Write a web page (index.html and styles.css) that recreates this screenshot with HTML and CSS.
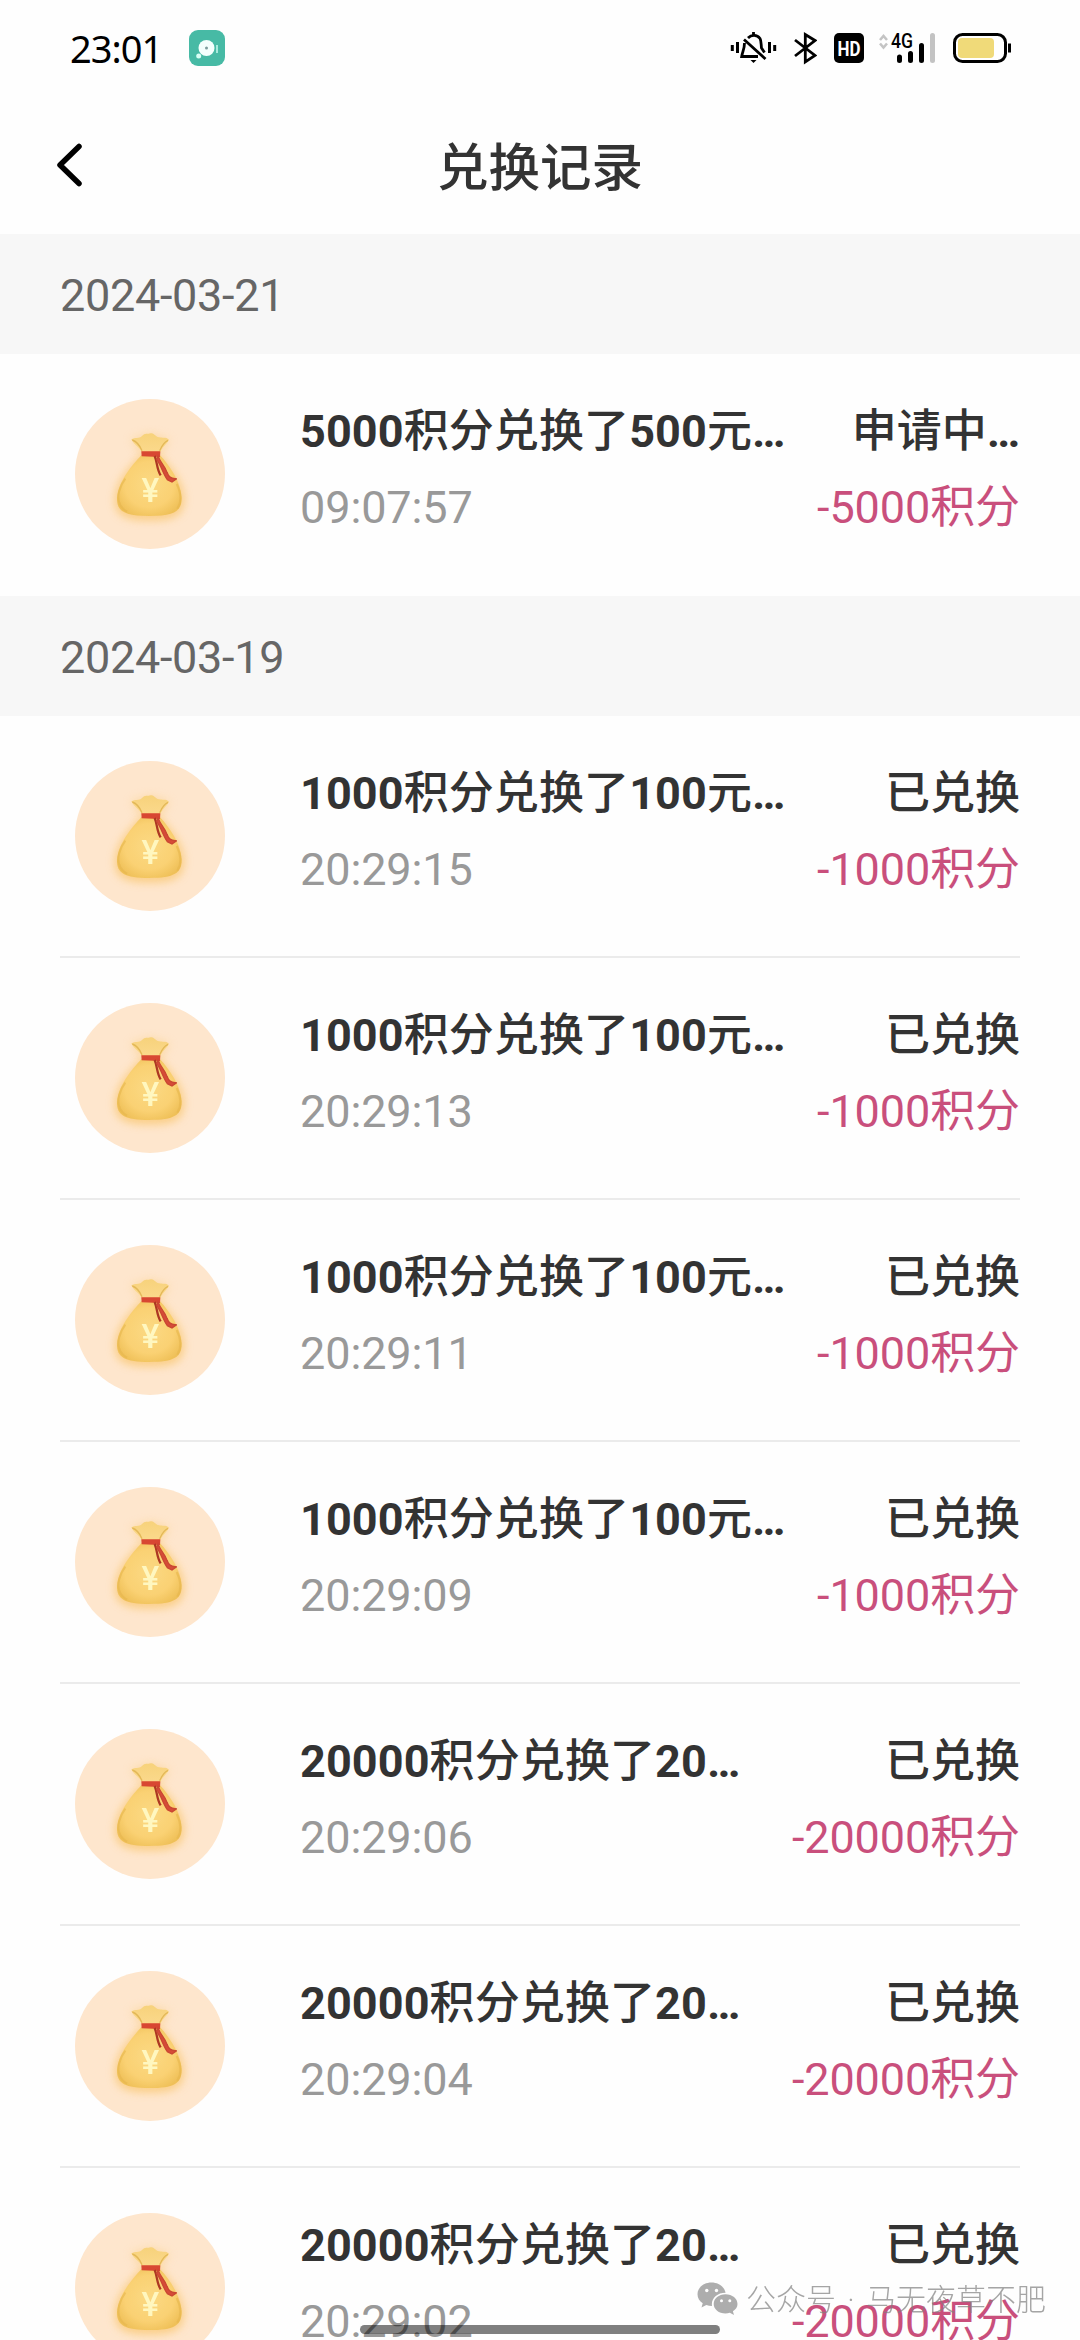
FILE: index.html
```html
<!DOCTYPE html>
<html lang="zh-CN">
<head>
<meta charset="utf-8">
<title>兑换记录</title>
<link rel="stylesheet" href="styles.css">
</head>
<body>
<svg class="defs" width="0" height="0">
  <defs>
    <radialGradient id="bagFill" cx="50%" cy="48%" r="58%">
      <stop offset="0" stop-color="#fbd983"/>
      <stop offset=".65" stop-color="#fad173"/>
      <stop offset="1" stop-color="#efc058"/>
    </radialGradient>
    <linearGradient id="neckFill" x1="0" y1="0" x2="0" y2="1">
      <stop offset="0" stop-color="#f7d27b"/>
      <stop offset="1" stop-color="#fbd98c"/>
    </linearGradient>
    <filter id="glow" x="-30%" y="-30%" width="160%" height="160%"><feGaussianBlur stdDeviation="12"/></filter>
    <filter id="soft" x="-5%" y="-5%" width="110%" height="110%"><feGaussianBlur stdDeviation="2"/></filter>
    <symbol id="bag" viewBox="45 57 450 450">
      <circle cx="270" cy="282" r="225" fill="#fee6cd"/>
      <path d="M243 226C205 262 164 310 164 362C166 406 190 422 270 422C345 422 370 406 373 362C373 310 335 262 300 226Z" fill="#f9c56b" opacity=".7" filter="url(#glow)"/>
      <path d="M212 176L272 158L330 178L300 230L243 230Z" fill="#f9cf88" opacity=".5" filter="url(#glow)"/>
      <g filter="url(#soft)">
        <path d="M214 178C225 171 237 177 246 168C255 158 263 164 272 160C281 157 286 170 297 172C307 175 317 170 327 179C321 191 306 201 300 218L246 218C243 204 222 196 214 178Z" fill="url(#neckFill)"/>
        <path d="M217 180C228 184 239 195 246 212M324 181C314 185 306 196 299 212" fill="none" stroke="#e3b858" stroke-width="4"/>
        <path d="M244 226C216 256 174 305 171 354C170 394 194 408 268 408C342 408 366 394 365 352C362 306 329 256 300 226Z" fill="url(#bagFill)"/>
        <path d="M196 296C178 320 170 349 179 371C184 384 192 390 201 395M350 312C363 338 365 365 352 386" fill="none" stroke="#e6b54c" stroke-width="6" opacity=".6"/>
        <path d="M244 214L301 214L300 231L245 229Z" fill="#d84631"/>
        <path d="M284 228C292 246 290 268 302 286" fill="none" stroke="#ad3824" stroke-width="7"/>
        <path d="M294 228C302 250 315 257 321 277C326 292 334 298 350 296L336 306L322 299C309 282 304 257 290 239Z" fill="#d64c38" stroke="#c94732" stroke-width="4"/>
        <text x="271" y="366" class="bag-yen">¥</text>
      </g>
    </symbol>
  </defs>
</svg>

<main class="screen">
  <div class="status">
    <span class="clock">23:01</span>
    <svg class="app-badge" width="36" height="36" viewBox="0 0 36 36">
      <rect width="36" height="36" rx="9" fill="#47baa5"/>
      <circle cx="17.5" cy="18" r="8" fill="#f4fffd"/>
      <circle cx="17.5" cy="18" r="1.5" fill="#7d9c9c"/>
      <circle cx="9.7" cy="26" r="2.5" fill="#d8fff5"/>
      <path d="M28 15v8" stroke="#a7eadc" stroke-width="2"/>
    </svg>
    <div class="status-icons">
      <svg width="47" height="34" viewBox="730 31 47 34" fill="none" stroke="#000" stroke-width="2.8">
        <path d="M732.3 45v6M737.5 42v11M769.5 42v11M774.7 45v6" stroke-width="3"/>
        <path d="M748 38C751.500 34.500 757 34.500 760 38.500C761.500 41 761 45 761.500 48L764.500 52.500M744.500 43C744.500 49 742.500 51.500 741.700 56.500H758"/>
        <path d="M744 39.500L765.500 59M753.500 32v3"/>
        <path d="M750.500 60h6l-3 3z" fill="#000" stroke="none"/>
      </svg>
      <svg class="bluetooth" width="24" height="34" viewBox="793 31 24 34" fill="none" stroke="#000" stroke-width="2.8">
        <path d="M795 40L815 55.500L805.300 62V34.500L815 40.500L795 56"/>
      </svg>
      <svg class="hd" width="30" height="34" viewBox="834 31 30 34">
        <rect x="834" y="33" width="30" height="30" rx="5"/>
        <text x="849" y="55.500" class="hd-text" textLength="23" lengthAdjust="spacingAndGlyphs">HD</text>
      </svg>
      <svg class="signal" width="57" height="34" viewBox="879 31 57 34">
        <path d="M880 40l3.500-4 3.500 4M880 43.500l3.500 4 3.500-4" fill="none" stroke="#c4c4c4" stroke-width="2.600"/>
        <text x="891" y="47.500" class="net-text" textLength="22" lengthAdjust="spacingAndGlyphs">4G</text>
        <g stroke-width="5" stroke-linecap="round">
          <path d="M899.500 57v3.500M910.500 53.500v7M921.500 45.500v15" stroke="#000"/>
          <path d="M932.500 35.500v25" stroke="#c3c3c3"/>
        </g>
      </svg>
      <svg class="battery" width="59" height="34" viewBox="953 31 59 34">
        <rect x="954.500" y="34.500" width="51" height="27" rx="8" fill="#fff" stroke="#000" stroke-width="3"/>
        <rect x="958" y="38" width="36" height="20" rx="4" fill="#f0da79"/>
        <path d="M1009.500 43.500v9" stroke="#000" stroke-width="3"/>
      </svg>
    </div>
  </div>

  <header class="nav">
    <svg class="back" width="28" height="48" viewBox="0 0 28 48" fill="none" stroke="#000" stroke-width="5.500" stroke-linecap="round" stroke-linejoin="round">
      <path d="M23 5.500L4 24L23 42.500"/>
    </svg>
    <h1 class="nav-title">兑换记录</h1>
  </header>

  <h2 class="date">2024-03-21</h2>
  <ul class="records">
    <li class="record">
      <svg class="bag"><use href="#bag"/></svg>
      <div class="info"><p class="name"><b>5000</b>积分兑换了<b>500</b>元<b>…</b></p><p class="time">09:07:57</p></div>
      <div class="result"><p class="state">申请中<b>…</b></p><p class="points">-5000积分</p></div>
    </li>
  </ul>

  <h2 class="date">2024-03-19</h2>
  <ul class="records">
    <li class="record">
      <svg class="bag"><use href="#bag"/></svg>
      <div class="info"><p class="name"><b>1000</b>积分兑换了<b>100</b>元<b>…</b></p><p class="time">20:29:15</p></div>
      <div class="result"><p class="state">已兑换</p><p class="points">-1000积分</p></div>
    </li>
    <li class="record">
      <svg class="bag"><use href="#bag"/></svg>
      <div class="info"><p class="name"><b>1000</b>积分兑换了<b>100</b>元<b>…</b></p><p class="time">20:29:13</p></div>
      <div class="result"><p class="state">已兑换</p><p class="points">-1000积分</p></div>
    </li>
    <li class="record">
      <svg class="bag"><use href="#bag"/></svg>
      <div class="info"><p class="name"><b>1000</b>积分兑换了<b>100</b>元<b>…</b></p><p class="time">20:29:11</p></div>
      <div class="result"><p class="state">已兑换</p><p class="points">-1000积分</p></div>
    </li>
    <li class="record">
      <svg class="bag"><use href="#bag"/></svg>
      <div class="info"><p class="name"><b>1000</b>积分兑换了<b>100</b>元<b>…</b></p><p class="time">20:29:09</p></div>
      <div class="result"><p class="state">已兑换</p><p class="points">-1000积分</p></div>
    </li>
    <li class="record">
      <svg class="bag"><use href="#bag"/></svg>
      <div class="info"><p class="name"><b>20000</b>积分兑换了<b>20…</b></p><p class="time">20:29:06</p></div>
      <div class="result"><p class="state">已兑换</p><p class="points">-20000积分</p></div>
    </li>
    <li class="record">
      <svg class="bag"><use href="#bag"/></svg>
      <div class="info"><p class="name"><b>20000</b>积分兑换了<b>20…</b></p><p class="time">20:29:04</p></div>
      <div class="result"><p class="state">已兑换</p><p class="points">-20000积分</p></div>
    </li>
    <li class="record">
      <svg class="bag"><use href="#bag"/></svg>
      <div class="info"><p class="name"><b>20000</b>积分兑换了<b>20…</b></p><p class="time">20:29:02</p></div>
      <div class="result"><p class="state">已兑换</p><p class="points">-20000积分</p></div>
    </li>
  </ul>

  <div class="watermark">
    <svg width="41" height="34" viewBox="0 0 41 34">
      <path d="M14.500 0.500C6.500 0.500 0.500 5.700 0.500 12.200C0.500 16 2.500 19.200 5.700 21.300L4.500 25.500L9.300 23C11 23.600 13 23.900 15 23.900C14 16.500 20 10.800 28.600 10.800C27.500 5 21.800 0.500 14.500 0.500Z"/>
      <path d="M28.500 12.300C21.800 12.300 16.700 16.600 16.700 21.900C16.700 27.200 21.800 31.400 28.500 31.400C30 31.400 31.500 31.200 32.800 30.700L37 33L35.900 29.200C38.700 27.500 40.500 24.900 40.500 21.900C40.500 16.600 35.300 12.300 28.500 12.300Z"/>
      <g fill="#fff"><circle cx="9.800" cy="8.500" r="1.700"/><circle cx="19.500" cy="8.500" r="1.700"/><circle cx="24.500" cy="18.800" r="1.500"/><circle cx="32.800" cy="18.800" r="1.500"/></g>
    </svg>
    <span>公众号 · 马无夜草不肥</span>
  </div>
  <div class="home-bar"></div>
</main>
</body>
</html>
```
FILE: styles.css
```css
* { box-sizing: border-box; }
body, h1, h2, p, ul { margin: 0; padding: 0; }
ul { list-style: none; }

body {
  width: 1080px;
  height: 2340px;
  overflow: hidden;
  background: #fefefe;
  font-family: Roboto, "Noto Sans CJK SC", sans-serif;
  color: #333;
}

.defs { position: absolute; }
.screen { position: relative; height: 2340px; overflow: hidden; }

.status {
  display: flex;
  align-items: center;
  height: 96px;
  padding: 0 68px 0 70px;
}
.clock {
  width: 119px;
  font: 400 38px/50px "Noto Sans", sans-serif;
  letter-spacing: -1px;
  color: #000;
}
.status-icons { display: flex; margin-left: auto; }
.bluetooth { margin-left: 16px; }
.hd { margin-left: 17px; }
.signal { margin-left: 15px; }
.battery { margin-left: 17px; }
.hd-text { font: 700 20px Roboto, sans-serif; fill: #fff; text-anchor: middle; }
.net-text { font: 500 20px Roboto, sans-serif; fill: #000; }

.nav {
  display: grid;
  grid-template-columns: 60px 1fr 60px;
  align-items: center;
  height: 138px;
  padding: 0 56px;
}
.nav-title {
  padding-top: 7px;
  font-size: 51.5px;
  font-weight: 500;
  line-height: 74px;
  text-align: center;
}

.date {
  height: 120px;
  padding-left: 60px;
  background: #f7f7f7;
  font-size: 45px;
  font-weight: 400;
  line-height: 124px;
  letter-spacing: -0.3px;
  color: #666;
}

.records { padding: 0 60px; }
.record {
  display: flex;
  height: 242px;
  padding: 45px 0 0 15px;
  border-bottom: 2px solid #ebebeb;
}
.record:last-child { border-bottom-color: transparent; }
.bag { flex: none; width: 150px; height: 150px; }
.bag-yen { font: 500 100px Roboto, sans-serif; fill: #fff7c0; text-anchor: middle; }

.info { flex: 1; margin-left: 75px; }
.result { text-align: right; }
.info, .result { margin-top: -5px; font-size: 45px; line-height: 76px; white-space: nowrap; }
.name, .state { font-weight: 500; height: 76px; }
.name b, .state b { font-weight: 700; }
.name { letter-spacing: 0.1px; }
.time { color: #999; letter-spacing: -0.1px; }
.points { color: #c94f7c; letter-spacing: -0.1px; }

.watermark {
  position: absolute;
  left: 697px;
  top: 2275px;
  display: flex;
  align-items: center;
  gap: 8px;
  font: 300 30px/44px Roboto, "Noto Sans CJK SC", sans-serif;
  color: #808080;
  fill: #8c8c8c;
  opacity: .7;
  white-space: nowrap;
}
.watermark span { padding-top: 3px; word-spacing: 4px; }
.home-bar {
  position: absolute;
  left: 360px;
  top: 2325px;
  width: 360px;
  height: 9px;
  border-radius: 5px;
  background: rgba(0, 0, 0, .5);
}
```
